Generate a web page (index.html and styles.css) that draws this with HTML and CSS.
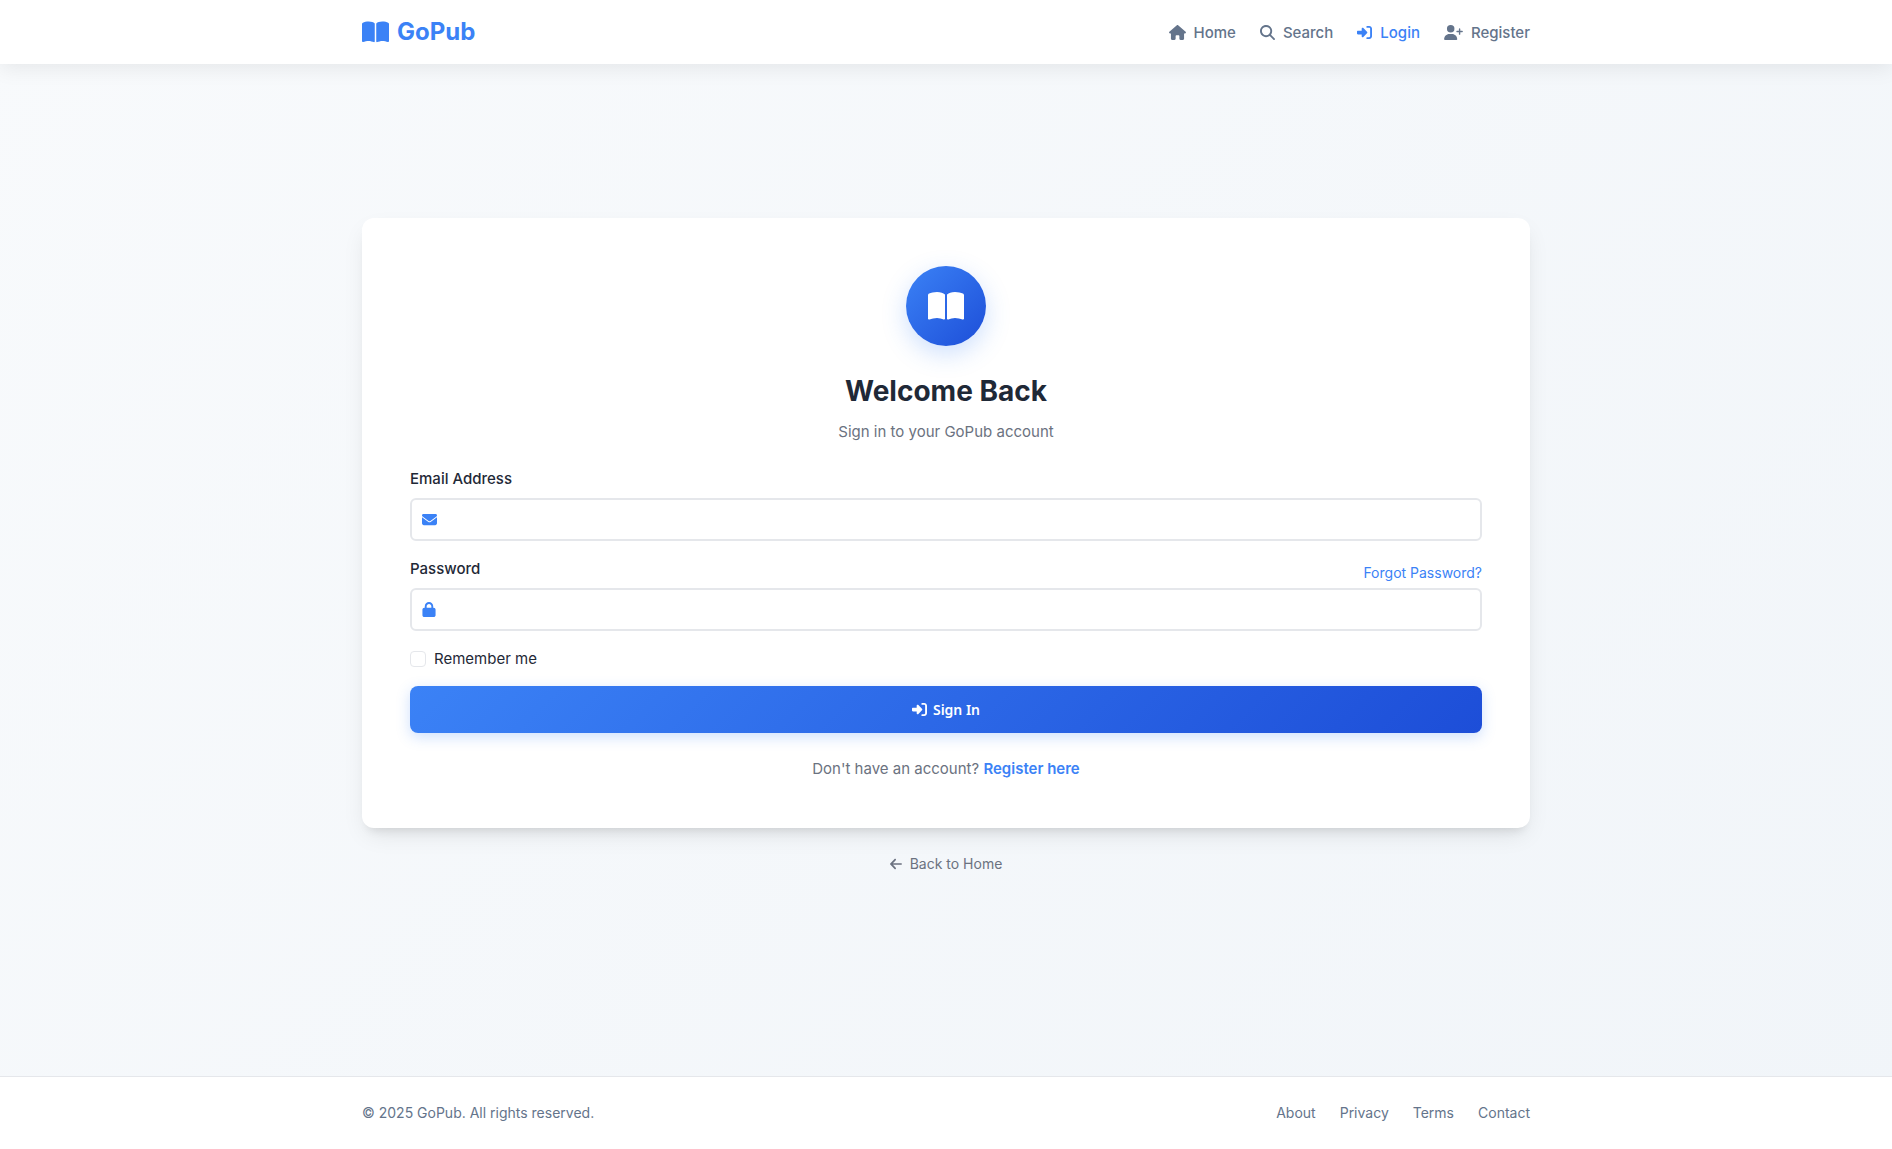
FILE: index.html
```html
<!DOCTYPE html>
<html lang="en">
<head>
<meta charset="utf-8">
<meta name="viewport" content="width=device-width, initial-scale=1">
<title>Login - GoPub</title>
<link rel="stylesheet" href="styles.css">
</head>
<body>
<svg class="sprite" aria-hidden="true">
  <symbol id="book" viewBox="0 0 576 512"><path d="M249.6 471.5c10.8 3.8 22.4-4.1 22.4-15.5V78.6c0-4.2-1.6-8.4-5-11C247.4 52 202.4 32 144 32C93.5 32 46.3 45.3 18.1 56.1C6.8 60.5 0 71.7 0 83.8V454.1c0 11.9 12.8 20.2 24.1 16.5C55.6 460.1 105.5 448 144 448c33.9 0 79 14 105.6 23.5zm76.8 0C353 462 398.1 448 432 448c38.5 0 88.4 12.1 119.9 22.6c11.3 3.8 24.1-4.6 24.1-16.5V83.8c0-12.1-6.8-23.3-18.1-27.6C529.7 45.3 482.5 32 432 32c-58.4 0-103.4 20-123 35.6c-3.3 2.6-5 6.8-5 11V456c0 11.4 11.7 19.3 22.4 15.5z"/></symbol>
  <symbol id="house" viewBox="0 0 576 512"><path d="M575.8 255.5c0 18-15 32.1-32 32.1h-32l.7 160.2c0 2.7-.2 5.4-.5 8.1V472c0 22.1-17.9 40-40 40H456c-1.1 0-2.2 0-3.3-.1c-1.4 .1-2.8 .1-4.2 .1H416 392c-22.1 0-40-17.9-40-40V448 384c0-17.7-14.3-32-32-32H256c-17.7 0-32 14.3-32 32v64 24c0 22.1-17.9 40-40 40H160 128.1c-1.5 0-3-.1-4.5-.2c-1.2 .1-2.4 .2-3.6 .2H104c-22.1 0-40-17.9-40-40V360c0-.9 0-1.9 .1-2.8V287.6H32c-18 0-32-14-32-32.1c0-9 3-17 10-24L266.4 8c7-7 15-8 22-8s15 2 21 7L564.8 231.5c8 7 12 15 11 24z"/></symbol>
  <symbol id="search" viewBox="0 0 512 512"><path d="M416 208c0 45.9-14.9 88.3-40 122.7L502.6 457.4c12.5 12.5 12.5 32.8 0 45.3s-32.8 12.5-45.3 0L330.7 376c-34.4 25.2-76.8 40-122.7 40C93.1 416 0 322.9 0 208S93.1 0 208 0S416 93.1 416 208zM208 352a144 144 0 1 0 0-288 144 144 0 1 0 0 288z"/></symbol>
  <symbol id="login" viewBox="0 0 512 512"><path d="M217.9 105.9L340.7 228.7c7.2 7.2 11.3 17.1 11.3 27.3s-4.1 20.1-11.3 27.3L217.9 406.1c-6.4 6.4-15 9.9-24 9.9c-18.7 0-33.9-15.2-33.9-33.9l0-62.1L32 320c-17.7 0-32-14.3-32-32l0-64c0-17.7 14.3-32 32-32l128 0 0-62.1c0-18.7 15.2-33.9 33.9-33.9c9 0 17.6 3.6 24 9.9zM352 416l64 0c17.7 0 32-14.3 32-32l0-256c0-17.7-14.3-32-32-32l-64 0c-17.7 0-32-14.3-32-32s14.3-32 32-32l64 0c53 0 96 43 96 96l0 256c0 53-43 96-96 96l-64 0c-17.7 0-32-14.3-32-32s14.3-32 32-32z"/></symbol>
  <symbol id="user-plus" viewBox="0 0 640 512"><path d="M96 128a128 128 0 1 1 256 0A128 128 0 1 1 96 128zM0 482.3C0 383.8 79.8 304 178.3 304h91.4C368.2 304 448 383.8 448 482.3c0 16.4-13.3 29.7-29.7 29.7H29.7C13.3 512 0 498.7 0 482.3zM504 312V248H440c-13.3 0-24-10.7-24-24s10.7-24 24-24h64V136c0-13.3 10.7-24 24-24s24 10.7 24 24v64h64c13.3 0 24 10.7 24 24s-10.7 24-24 24H552v64c0 13.3-10.7 24-24 24s-24-10.7-24-24z"/></symbol>
  <symbol id="envelope" viewBox="0 0 512 512"><path d="M48 64C21.5 64 0 85.5 0 112c0 15.1 7.1 29.3 19.2 38.4L236.8 313.6c11.4 8.5 27 8.5 38.4 0L492.8 150.4c12.1-9.1 19.2-23.3 19.2-38.4c0-26.5-21.5-48-48-48H48zM0 176V384c0 35.3 28.7 64 64 64H448c35.3 0 64-28.7 64-64V176L294.4 339.2c-22.8 17.1-54 17.1-76.8 0L0 176z"/></symbol>
  <symbol id="lock" viewBox="0 0 448 512"><path d="M144 144v48H304V144c0-44.2-35.8-80-80-80s-80 35.8-80 80zM80 192V144C80 64.5 144.5 0 224 0s144 64.5 144 144v48h16c35.3 0 64 28.7 64 64V448c0 35.3-28.7 64-64 64H64c-35.3 0-64-28.7-64-64V256c0-35.3 28.7-64 64-64H80z"/></symbol>
  <symbol id="arrow-left" viewBox="0 0 448 512"><path d="M9.4 233.4c-12.5 12.5-12.5 32.8 0 45.3l160 160c12.5 12.5 32.8 12.5 45.3 0s12.5-32.8 0-45.3L109.2 288 416 288c17.7 0 32-14.3 32-32s-14.3-32-32-32l-306.7 0L214.6 118.6c12.5-12.5 12.5-32.8 0-45.3s-32.8-12.5-45.3 0l-160 160z"/></symbol>
</svg>

<header class="header">
  <div class="container bar">
    <a class="logo" href="#"><svg class="logo-icon" aria-hidden="true"><use href="#book"/></svg>GoPub</a>
    <nav class="nav" aria-label="Main">
      <a class="nav-link" href="#"><svg class="icon icon-wide" aria-hidden="true"><use href="#house"/></svg>Home</a>
      <a class="nav-link" href="#"><svg class="icon" aria-hidden="true"><use href="#search"/></svg>Search</a>
      <a class="nav-link active" href="#"><svg class="icon" aria-hidden="true"><use href="#login"/></svg>Login</a>
      <a class="nav-link" href="#"><svg class="icon icon-wider" aria-hidden="true"><use href="#user-plus"/></svg>Register</a>
    </nav>
  </div>
</header>

<main class="main container">
  <section class="card">
    <div class="card-head">
      <div class="badge"><svg class="badge-icon" aria-hidden="true"><use href="#book"/></svg></div>
      <h1 class="title">Welcome Back</h1>
      <p class="subtitle">Sign in to your GoPub account</p>
    </div>
    <form class="form">
      <div class="field">
        <div class="label-row"><label class="label" for="email">Email Address</label></div>
        <div class="input-box">
          <svg class="icon" aria-hidden="true"><use href="#envelope"/></svg>
          <input class="input" type="email" id="email" name="email" autocomplete="email">
        </div>
      </div>
      <div class="field">
        <div class="label-row">
          <label class="label" for="password">Password</label>
          <a class="forgot" href="#">Forgot Password?</a>
        </div>
        <div class="input-box">
          <svg class="icon icon-narrow" aria-hidden="true"><use href="#lock"/></svg>
          <input class="input" type="password" id="password" name="password" autocomplete="current-password">
        </div>
      </div>
      <div class="remember">
        <input class="checkbox" type="checkbox" id="remember" name="remember">
        <label for="remember">Remember me</label>
      </div>
      <button class="submit" type="submit"><svg class="icon" aria-hidden="true"><use href="#login"/></svg>Sign In</button>
    </form>
    <p class="signup">Don't have an account? <a class="signup-link" href="#">Register here</a></p>
  </section>
  <a class="back" href="#"><svg class="back-icon" aria-hidden="true"><use href="#arrow-left"/></svg>Back to Home</a>
</main>

<footer class="footer">
  <div class="container footer-row">
    <p class="copyright">© 2025 GoPub. All rights reserved.</p>
    <nav class="footer-links" aria-label="Footer">
      <a href="#">About</a>
      <a href="#">Privacy</a>
      <a href="#">Terms</a>
      <a href="#">Contact</a>
    </nav>
  </div>
</footer>
</body>
</html>
```

FILE: styles.css
```css
:root {
  --primary: #3b82f6;
  --primary-dark: #1d4ed8;
  --text: #1f2937;
  --muted: #6b7280;
  --slate: #64748b;
  --border: #e5e7eb;
}

* { box-sizing: border-box; }

body {
  margin: 0;
  min-height: 100vh;
  display: flex;
  flex-direction: column;
  font-family: Inter, "Liberation Sans", sans-serif;
  font-size: 15px;
  line-height: 23px;
  color: var(--text);
  background: linear-gradient(135deg, #f8fafc 0%, #f1f5f9 100%);
}

h1, p { margin: 0; }
a { color: inherit; text-decoration: none; }
svg { flex: none; fill: currentColor; }

.sprite { position: absolute; width: 0; height: 0; }

.icon { width: 15px; height: 15px; }
.icon-narrow { width: 14px; }
.icon-wide { width: 17px; }
.icon-wider { width: 19px; }

.container {
  width: 100%;
  max-width: 1200px;
  margin: 0 auto;
  padding: 0 16px;
}

.header {
  background: #fff;
  box-shadow: 0 4px 20px rgba(0, 0, 0, 0.08);
}

.bar {
  min-height: 64px;
  display: flex;
  align-items: center;
  justify-content: space-between;
}

.logo {
  display: flex;
  align-items: center;
  gap: 8px;
  font-size: 24px;
  font-weight: 700;
  line-height: 36px;
  color: var(--primary);
}

.logo-icon { width: 27px; height: 24px; }

.nav { display: flex; gap: 24px; }

.nav-link {
  display: flex;
  align-items: center;
  gap: 8px;
  font-weight: 500;
  color: var(--slate);
}

.nav-link.active { color: var(--primary); }

.main {
  flex: 1;
  display: flex;
  flex-direction: column;
  justify-content: center;
  align-items: center;
  gap: 24px;
  padding-bottom: 46px;
}

.card {
  width: 100%;
  padding: 48px;
  background: #fff;
  border-radius: 12px;
  box-shadow: 0 10px 25px -5px rgba(0, 0, 0, 0.1), 0 8px 10px -6px rgba(0, 0, 0, 0.1);
}

.card-head {
  display: flex;
  flex-direction: column;
  align-items: center;
  margin-bottom: 24px;
  text-align: center;
}

.badge {
  display: grid;
  place-items: center;
  width: 80px;
  height: 80px;
  margin-bottom: 24px;
  border-radius: 50%;
  color: #fff;
  background: linear-gradient(135deg, var(--primary), var(--primary-dark));
  box-shadow: 0 8px 24px rgba(59, 130, 246, 0.25);
}

.badge-icon { width: 36px; height: 32px; }

.title {
  margin-bottom: 8px;
  font-size: 28px;
  font-weight: 700;
  line-height: 42px;
}

.subtitle { color: var(--muted); }

.form {
  display: flex;
  flex-direction: column;
  gap: 16px;
}

.label-row {
  display: flex;
  align-items: center;
  justify-content: space-between;
}

.label {
  margin-bottom: 8px;
  font-weight: 500;
}

.forgot {
  font-size: 14px;
  color: var(--primary);
}

.input-box {
  display: flex;
  align-items: center;
  gap: 12px;
  height: 43px;
  padding: 0 10px;
  border: 2px solid var(--border);
  border-radius: 6px;
  color: var(--primary);
}

.input-box:focus-within { border-color: var(--primary); }

.input {
  flex: 1;
  min-width: 0;
  padding: 0;
  border: 0;
  outline: 0;
  background: transparent;
  font: inherit;
  color: var(--text);
}

.remember {
  display: flex;
  align-items: center;
  gap: 8px;
}

.checkbox {
  appearance: none;
  width: 16px;
  height: 16px;
  margin: 0;
  border: 1px solid var(--border);
  border-radius: 4px;
  background: #fff;
}

.checkbox:checked { background: var(--primary); }

.submit {
  display: flex;
  align-items: center;
  justify-content: center;
  gap: 6px;
  height: 47px;
  padding: 0 24px;
  border: 0;
  border-radius: 8px;
  font-family: "Noto Sans", sans-serif;
  font-size: 14px;
  font-weight: 600;
  color: #fff;
  background: linear-gradient(135deg, var(--primary), var(--primary-dark));
  box-shadow: 0 4px 14px rgba(59, 130, 246, 0.25);
}

.signup {
  margin-top: 24px;
  text-align: center;
  color: var(--muted);
}

.signup-link {
  font-weight: 600;
  color: var(--primary);
}

.back {
  display: flex;
  align-items: center;
  gap: 8px;
  font-size: 14px;
  line-height: 24px;
  color: var(--muted);
}

.back-icon { width: 12px; height: 14px; }

.footer {
  padding: 24px 0;
  border-top: 1px solid var(--border);
  background: #fff;
}

.footer-row {
  display: flex;
  flex-wrap: wrap;
  align-items: center;
  justify-content: space-between;
  gap: 0 24px;
  font-size: 14px;
  line-height: 24px;
  color: var(--slate);
}

.footer-links { display: flex; gap: 24px; }
```
